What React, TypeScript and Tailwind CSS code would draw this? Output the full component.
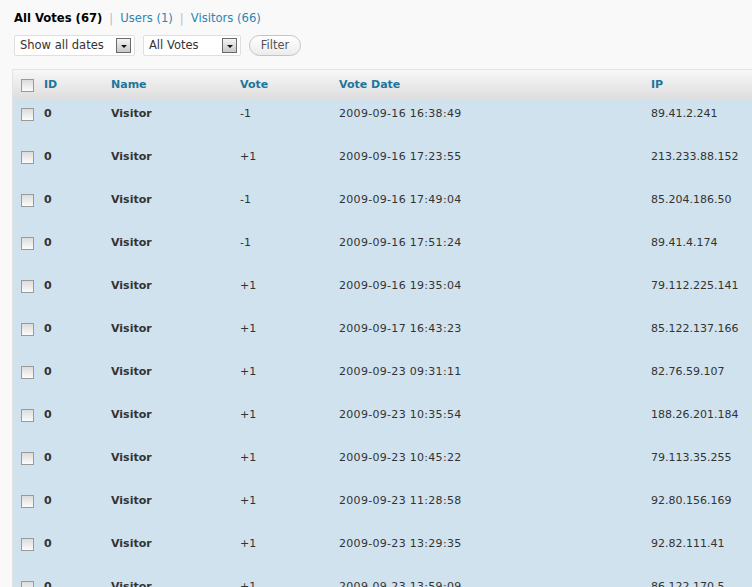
import React from "react";

type VoteRow = {
  id: number;
  name: string;
  vote: string;
  date: string;
  ip: string;
};

const rows: VoteRow[] = [
  { id: 0, name: "Visitor", vote: "-1", date: "2009-09-16 16:38:49", ip: "89.41.2.241" },
  { id: 0, name: "Visitor", vote: "+1", date: "2009-09-16 17:23:55", ip: "213.233.88.152" },
  { id: 0, name: "Visitor", vote: "-1", date: "2009-09-16 17:49:04", ip: "85.204.186.50" },
  { id: 0, name: "Visitor", vote: "-1", date: "2009-09-16 17:51:24", ip: "89.41.4.174" },
  { id: 0, name: "Visitor", vote: "+1", date: "2009-09-16 19:35:04", ip: "79.112.225.141" },
  { id: 0, name: "Visitor", vote: "+1", date: "2009-09-17 16:43:23", ip: "85.122.137.166" },
  { id: 0, name: "Visitor", vote: "+1", date: "2009-09-23 09:31:11", ip: "82.76.59.107" },
  { id: 0, name: "Visitor", vote: "+1", date: "2009-09-23 10:35:54", ip: "188.26.201.184" },
  { id: 0, name: "Visitor", vote: "+1", date: "2009-09-23 10:45:22", ip: "79.113.35.255" },
  { id: 0, name: "Visitor", vote: "+1", date: "2009-09-23 11:28:58", ip: "92.80.156.169" },
  { id: 0, name: "Visitor", vote: "+1", date: "2009-09-23 13:29:35", ip: "92.82.111.41" },
  { id: 0, name: "Visitor", vote: "+1", date: "2009-09-23 13:59:09", ip: "86.122.170.5" },
];

const cols = "grid grid-cols-[31px_67px_129px_99px_312px_149px]";

function Check() {
  return (
    <span className="block h-[13px] w-[13px] border border-[#9a9a9a] bg-gradient-to-b from-[#dcdcdc] to-[#fbfbfb]" />
  );
}

function Select({ label, width }: { label: string; width: string }) {
  return (
    <div
      className={`flex h-[21px] items-center justify-between rounded-[2px] border border-[#dfdfdf] bg-white pl-[5px] pr-[3px] ${width}`}
    >
      <span className="text-[11.5px] text-[#333]">{label}</span>
      <span className="flex h-[15px] w-[15px] items-center justify-center border border-[#6a6a6a] bg-gradient-to-b from-[#f4f4f4] to-[#c8c8c8]">
        <span className="mt-[2px] h-0 w-0 border-x-[3px] border-t-[3px] border-x-transparent border-t-[#111]" />
      </span>
    </div>
  );
}

export default function App() {
  return (
    <div className="h-[587px] w-[752px] overflow-hidden bg-[#f9f9f9] font-['DejaVu_Sans',Verdana,sans-serif]">
      <div className="flex h-[35px] items-center gap-[7px] pl-[14px] text-[11.6px] leading-[14px]">
        <span className="font-bold text-black">All Votes (67)</span>
        <span className="text-[#bbb]">|</span>
        <span className="text-[#2a86b3]">Users (1)</span>
        <span className="text-[#bbb]">|</span>
        <span className="text-[#2a86b3]">Visitors (66)</span>
      </div>

      <div className="flex items-center gap-[8px] pl-[14px]">
        <Select label="Show all dates" width="w-[121px]" />
        <Select label="All Votes" width="w-[98px]" />
        <button className="h-[21px] w-[52px] rounded-full border border-[#c4c4c4] bg-gradient-to-b from-white to-[#ececec] text-[11.5px] text-[#555]">
          Filter
        </button>
      </div>

      <div className="ml-[12px] mt-[13px] w-[788px] border-l border-t border-[#e3e3e3]">
        <div
          className={`${cols} h-[29px] items-center bg-gradient-to-b from-[#f7f7f7] to-[#dedede] pt-[1px] text-[11px] font-bold text-[#21759b]`}
        >
          <div className="pl-[8px]">
            <Check />
          </div>
          <div>ID</div>
          <div>Name</div>
          <div>Vote</div>
          <div>Vote Date</div>
          <div>IP</div>
        </div>
        <div className="bg-[#d0e2ee] text-[11px] leading-[14px] text-[#333]">
          {rows.map((row, i) => (
            <div key={i} className={`${cols} h-[43px] items-start pt-[8px]`}>
              <div className="pl-[8px] pt-[1px]">
                <Check />
              </div>
              <div className="font-bold">{row.id}</div>
              <div className="font-bold">{row.name}</div>
              <div>{row.vote}</div>
              <div className="tracking-[0.3px]">{row.date}</div>
              <div>{row.ip}</div>
            </div>
          ))}
        </div>
      </div>
    </div>
  );
}
